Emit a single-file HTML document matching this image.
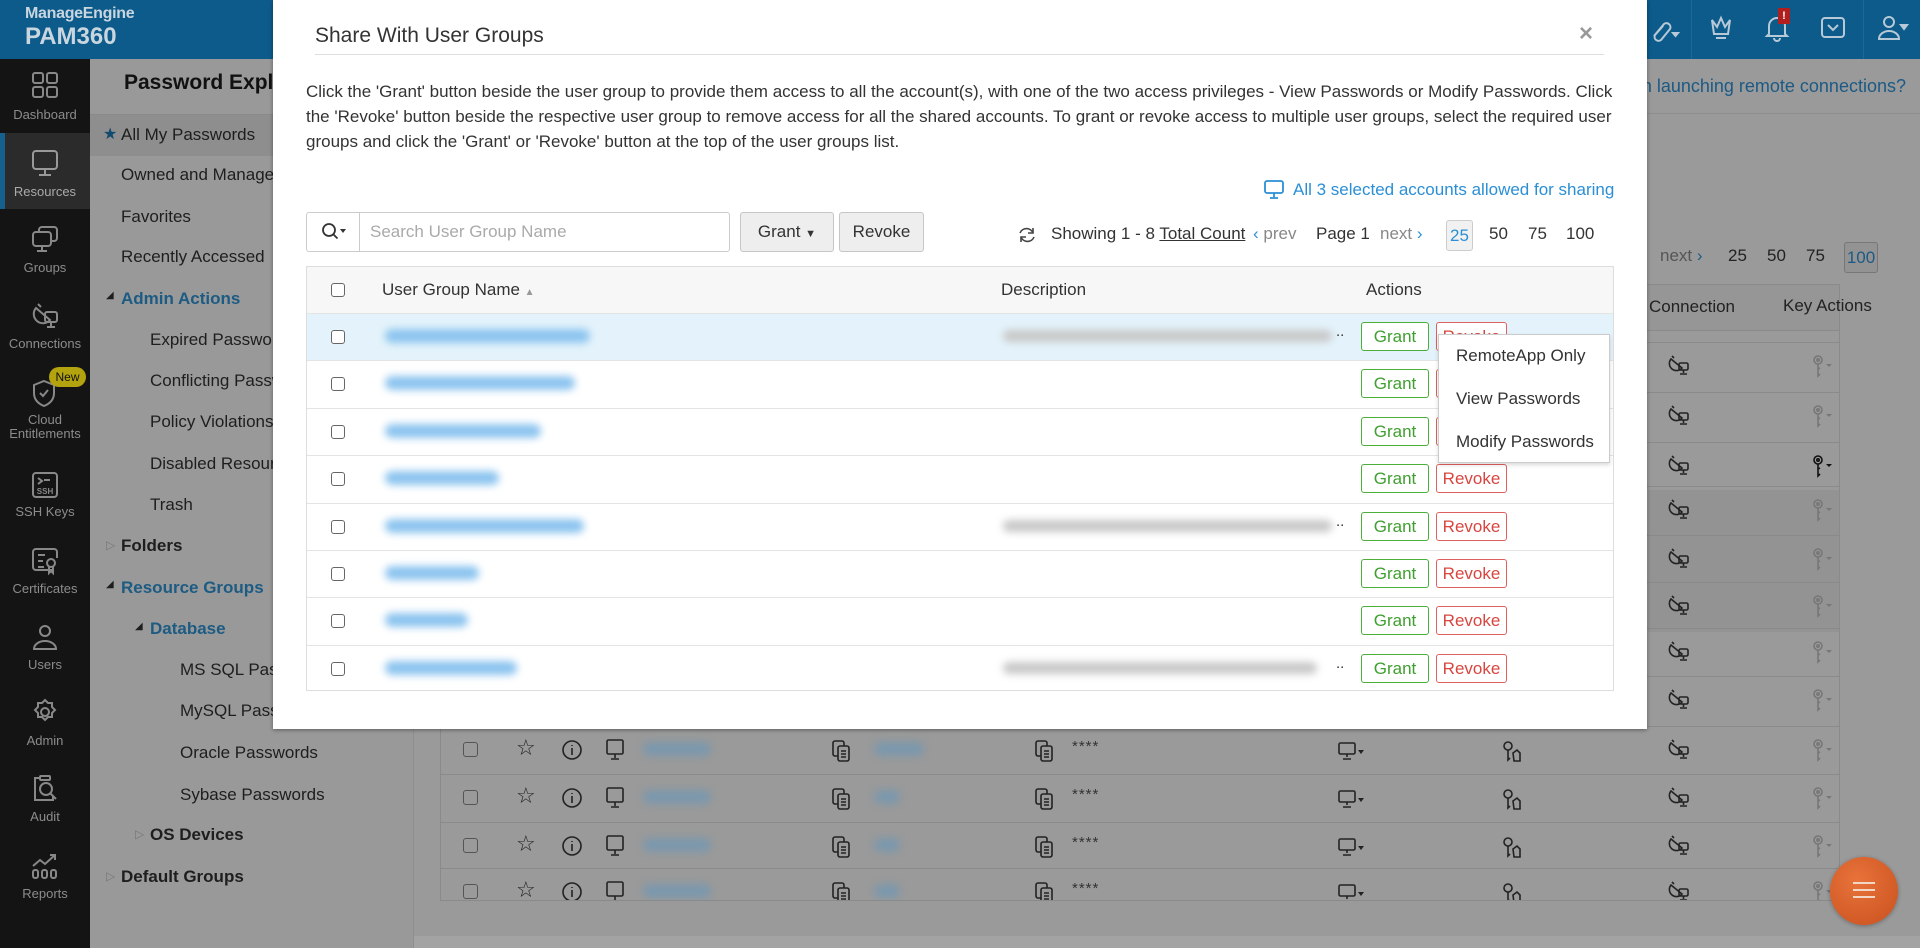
<!DOCTYPE html>
<html><head><meta charset="utf-8">
<style>
*{margin:0;padding:0;box-sizing:border-box}
body{width:1920px;height:948px;overflow:hidden;position:relative;background:#999;font-family:"Liberation Sans","DejaVu Sans",sans-serif}
.a{position:absolute;white-space:nowrap}
.hdr{left:0;top:0;width:1920px;height:59px;background:#0c5b8b}
.side{left:0;top:59px;width:90px;height:889px;background:#141414}
.sl{position:absolute;width:90px;text-align:center;color:#8c8c8c;font-size:13px}
.si{position:absolute;left:30px;width:30px;height:30px}
.tree{left:90px;top:59px;width:323px;height:889px;background:#999}
.tt{position:absolute;font-size:17px;color:#1e1e1e}
.blue{color:#1d5b83}
.b{font-weight:bold}
.modal{left:273px;top:0;width:1374px;height:729px;background:#fff;box-shadow:0 1px 4px rgba(0,0,0,.4)}
.m{position:absolute;white-space:nowrap}
.btn{position:absolute;border:1px solid #c6c6c6;background:#eee;border-radius:3px;font-size:17px;color:#333;text-align:center;line-height:38px}
.row{position:absolute;left:1px;width:1306px;height:47px;border-top:1px solid #e4e4e4}
.cb{position:absolute;width:14px;height:14px;border:1.5px solid #666;border-radius:3px;background:#fff}
.g{position:absolute;width:68px;height:29px;border:1px solid #4caf3a;border-radius:3px;color:#3f9f2f;font-size:17px;text-align:center;line-height:27px;background:#fff}
.r{position:absolute;width:71px;height:29px;border:1px solid #e06060;border-radius:3px;color:#d9453f;font-size:17px;text-align:center;line-height:27px;background:#fff}
.blur{position:absolute;height:14px;border-radius:7px;background:#8cc4ef;filter:blur(4px)}
.blurg{position:absolute;height:12px;border-radius:6px;background:#c8c8c8;filter:blur(4px)}
.bgrow{position:absolute;left:0;width:1400px;height:47px;border-top:1px solid #8a8a8a}
.ic{position:absolute}
</style></head><body>

<div class="a hdr"></div>
<div class="a" style="left:25px;top:5px;font-size:16px;color:#c9d6df;font-weight:bold;letter-spacing:-0.3px">ManageEngine</div>
<div class="a" style="left:25px;top:23px;font-size:24px;color:#c9d6df;font-weight:bold">PAM360</div>
<div class="a" style="left:1691px;top:0;width:1px;height:59px;background:#1a6a98"></div>
<div class="a" style="left:1863px;top:0;width:1px;height:59px;background:#1a6a98"></div>
<svg class="ic" style="left:1648px;top:14px" width="34" height="30" viewBox="0 0 34 30" fill="none" stroke="#b7c9d6" stroke-width="2"><path d="M6 22l10-12a4 4 0 016 5l-9 11a4 4 0 01-6-5l8-9"/><path d="M25 19h5l-2.5 3z" fill="#b7c9d6"/></svg>
<svg class="ic" style="left:1707px;top:14px" width="28" height="28" viewBox="0 0 28 28" fill="none" stroke="#b7c9d6" stroke-width="2"><path d="M5 6l5 7 4-9 4 9 5-7-2 14H7z"/><path d="M9 24h10"/></svg>
<svg class="ic" style="left:1762px;top:10px" width="30" height="32" viewBox="0 0 30 32" fill="none" stroke="#b7c9d6" stroke-width="2"><path d="M7 24V16a8 8 0 0116 0v8l2 2H5z"/><path d="M12 28a3 3 0 006 0"/></svg>
<div class="a" style="left:1778px;top:8px;width:12px;height:16px;background:#b01e1e;color:#fff;font-size:11px;text-align:center;font-weight:bold;line-height:16px">!</div>
<svg class="ic" style="left:1819px;top:15px" width="28" height="26" viewBox="0 0 28 26" fill="none" stroke="#b7c9d6" stroke-width="2"><rect x="3" y="3" width="22" height="19" rx="3"/><path d="M9 10l5 5 5-5"/></svg>
<svg class="ic" style="left:1876px;top:14px" width="34" height="28" viewBox="0 0 34 28" fill="none" stroke="#b7c9d6" stroke-width="2"><circle cx="13" cy="8" r="5"/><path d="M3 25a10 8 0 0120 0z"/><path d="M25 11h6l-3 4z" fill="#b7c9d6"/></svg>

<div class="a side"></div>
<div class="a" style="left:0;top:133px;width:90px;height:76px;background:#2b2b2b"></div>
<div class="a" style="left:0;top:133px;width:5px;height:76px;background:#15608e"></div>
<svg class="si" style="top:70px" viewBox="0 0 30 30" fill="none" stroke="#888" stroke-width="2"><rect x="3" y="3" width="10" height="10" rx="2"/><rect x="17" y="3" width="10" height="10" rx="2"/><rect x="3" y="17" width="10" height="10" rx="2"/><rect x="17" y="17" width="10" height="10" rx="2"/></svg>
<div class="sl" style="top:107px">Dashboard</div>
<svg class="si" style="top:148px" viewBox="0 0 30 30" fill="none" stroke="#999" stroke-width="2"><rect x="3" y="3" width="24" height="18" rx="3"/><path d="M15 21v5M9 27h12"/></svg>
<div class="sl" style="top:184px;color:#aaa">Resources</div>
<svg class="si" style="top:224px" viewBox="0 0 30 30" fill="none" stroke="#888" stroke-width="2"><rect x="9" y="3" width="18" height="14" rx="3"/><rect x="3" y="8" width="18" height="14" rx="3" fill="#141414"/><path d="M12 22v4M7 27h10"/></svg>
<div class="sl" style="top:260px">Groups</div>
<svg class="si" style="top:300px" viewBox="0 0 30 30" fill="none" stroke="#888" stroke-width="2"><path d="M6 8a9 9 0 0014 12z"/><path d="M8 4l3 3"/><rect x="15" y="12" width="12" height="10" rx="2"/><path d="M21 22v4M17 27h8"/></svg>
<div class="sl" style="top:336px">Connections</div>
<svg class="si" style="top:378px" viewBox="0 0 30 30" fill="none" stroke="#888" stroke-width="2"><path d="M14 3l10 4v8c0 7-5 11-10 13-5-2-10-6-10-13V7z"/><path d="M10 15l3 3 5-6"/></svg>
<div class="a" style="left:49px;top:367px;width:37px;height:20px;border-radius:10px;background:#b3a30e;color:#111;font-size:12px;text-align:center;line-height:20px">New</div>
<div class="sl" style="top:413px;line-height:14px">Cloud<br>Entitlements</div>
<svg class="si" style="top:470px" viewBox="0 0 30 30" fill="none" stroke="#888" stroke-width="2"><rect x="3" y="3" width="24" height="24" rx="3"/><path d="M8 8l4 3-4 3M14 10h6"/><text x="15" y="24" font-size="8" text-anchor="middle" fill="#888" stroke="none" font-weight="bold" font-family="Liberation Sans">SSH</text></svg>
<div class="sl" style="top:504px">SSH Keys</div>
<svg class="si" style="top:546px" viewBox="0 0 30 30" fill="none" stroke="#888" stroke-width="2"><path d="M22 24H6a3 3 0 01-3-3V6a3 3 0 013-3h18a3 3 0 013 3v6"/><path d="M8 9h7M8 15h5M8 21h6"/><circle cx="21" cy="17" r="4"/><path d="M19 21v6l2-2 2 2v-6"/></svg>
<div class="sl" style="top:581px">Certificates</div>
<svg class="si" style="top:622px" viewBox="0 0 30 30" fill="none" stroke="#888" stroke-width="2"><circle cx="15" cy="9" r="5"/><path d="M4 27a11 8 0 0122 0z"/></svg>
<div class="sl" style="top:657px">Users</div>
<svg class="si" style="top:697px" viewBox="0 0 30 30" fill="none" stroke="#888" stroke-width="2"><circle cx="15" cy="15" r="4"/><path d="M15 3l3 3h4v4l3 3-3 3v4h-4l-3 3-3-3H8v-4l-3-3 3-3V6h4z"/></svg>
<div class="sl" style="top:733px">Admin</div>
<svg class="si" style="top:773px" viewBox="0 0 30 30" fill="none" stroke="#888" stroke-width="2"><path d="M10 5H5v22h18v-4"/><rect x="10" y="3" width="10" height="4" rx="1"/><circle cx="16" cy="16" r="6"/><path d="M20 20l6 6"/></svg>
<div class="sl" style="top:809px">Audit</div>
<svg class="si" style="top:851px" viewBox="0 0 30 30" fill="none" stroke="#888" stroke-width="2"><path d="M3 15l7-6 5 4 10-9M20 4h5v5"/><rect x="3" y="19" width="5" height="8" rx="2"/><rect x="12" y="19" width="5" height="8" rx="2"/><rect x="21" y="19" width="5" height="8" rx="2"/></svg>
<div class="sl" style="top:886px">Reports</div>

<div class="a tree"></div>
<div class="a" style="left:413px;top:59px;width:1px;height:889px;background:#8e8e8e"></div>
<div class="a" style="left:124px;top:71px;font-size:21px;font-weight:bold;color:#111">Password Explorer</div>
<div class="a" style="left:90px;top:114px;width:323px;height:1px;background:#8a8a8a"></div>
<div class="a" style="left:90px;top:115px;width:323px;height:41px;background:#8e8e8e"></div>
<div class="a tt" style="left:103px;top:124px;color:#114a6e;font-size:16px">&#x2605;</div>
<div class="a tt" style="left:121px;top:125px">All My Passwords</div>
<div class="a tt" style="left:121px;top:165px">Owned and Managed</div>
<div class="a tt" style="left:121px;top:207px">Favorites</div>
<div class="a tt" style="left:121px;top:247px">Recently Accessed</div>
<div class="a tt" style="left:106px;top:290px;font-size:10px">&#x25E2;</div>
<div class="a tt blue b" style="left:121px;top:289px">Admin Actions</div>
<div class="a tt" style="left:150px;top:330px">Expired Passwords</div>
<div class="a tt" style="left:150px;top:371px">Conflicting Passwords</div>
<div class="a tt" style="left:150px;top:412px">Policy Violations</div>
<div class="a tt" style="left:150px;top:454px">Disabled Resources</div>
<div class="a tt" style="left:150px;top:495px">Trash</div>
<div class="a tt" style="left:106px;top:538px;font-size:12px;color:#777">&#x25B7;</div>
<div class="a tt b" style="left:121px;top:536px">Folders</div>
<div class="a tt" style="left:106px;top:579px;font-size:10px">&#x25E2;</div>
<div class="a tt blue b" style="left:121px;top:578px">Resource Groups</div>
<div class="a tt" style="left:135px;top:621px;font-size:10px">&#x25E2;</div>
<div class="a tt blue b" style="left:150px;top:619px">Database</div>
<div class="a tt" style="left:180px;top:660px">MS SQL Passwords</div>
<div class="a tt" style="left:180px;top:701px">MySQL Passwords</div>
<div class="a tt" style="left:180px;top:743px">Oracle Passwords</div>
<div class="a tt" style="left:180px;top:785px">Sybase Passwords</div>
<div class="a tt" style="left:135px;top:827px;font-size:12px;color:#777">&#x25B7;</div>
<div class="a tt b" style="left:150px;top:825px">OS Devices</div>
<div class="a tt" style="left:106px;top:869px;font-size:12px;color:#777">&#x25B7;</div>
<div class="a tt b" style="left:121px;top:867px">Default Groups</div>

<div class="a" style="left:414px;top:59px;width:1506px;height:889px;background:#9a9a9a"></div>
<div class="a" style="left:414px;top:936px;width:1506px;height:12px;background:#a3a3a3"></div>
<div class="a" style="left:1200px;top:76px;width:706px;text-align:right;font-size:18px;color:#1c5a85">Need help in launching remote connections?</div>
<div class="a" style="left:414px;top:113px;width:1506px;height:1px;background:#8e8e8e"></div>
<div class="a" style="left:1660px;top:246px;font-size:17px;color:#555">next <span style="color:#1c5a85">&#x203A;</span></div>
<div class="a" style="left:1728px;top:246px;font-size:17px;color:#222">25</div>
<div class="a" style="left:1767px;top:246px;font-size:17px;color:#222">50</div>
<div class="a" style="left:1806px;top:246px;font-size:17px;color:#222">75</div>
<div class="a" style="left:1844px;top:242px;width:34px;height:31px;border:1px solid #777;border-radius:3px;background:#939393;font-size:17px;color:#1c5a85;text-align:center;line-height:29px">100</div>
<div class="a" style="left:440px;top:284px;width:1400px;height:617px;border:1px solid #8a8a8a;background:#9a9a9a;overflow:hidden">
  <div class="a" style="left:0;top:0;width:1400px;height:46px;background:#969696;border-bottom:1px solid #8a8a8a"></div>
  <div class="a" style="left:1207px;top:205px;width:193px;height:142px;background:#939393"></div>
  <div class="a" style="left:1208px;top:12px;font-size:17px;color:#222">Connection</div>
  <div id="bgrows"></div>
</div>
<div class="a" style="left:1783px;top:296px;font-size:17px;color:#222">Key Actions</div>

<div class="a" style="left:1830px;top:857px;width:68px;height:68px;border-radius:50%;background:radial-gradient(circle at 40% 35%,#e8733a,#c9501e);box-shadow:0 1px 4px rgba(0,0,0,.3)"></div>
<div class="a" style="left:1853px;top:882px;width:22px;height:2px;background:#f3d6c6;box-shadow:0 7px 0 #f3d6c6,0 14px 0 #f3d6c6"></div>

<div class="a modal">
  <div class="m" style="left:42px;top:24px;font-size:21px;color:#333">Share With User Groups</div>
  <div class="m" style="left:42px;top:54px;width:1289px;height:1px;background:#ddd"></div>
  <div class="m" style="left:1306px;top:20px;font-size:24px;color:#999;font-weight:bold">&#xD7;</div>
  <div class="m" style="left:33px;top:79px;font-size:17px;color:#333;line-height:25px">Click the 'Grant' button beside the user group to provide them access to all the account(s), with one of the two access privileges - View Passwords or Modify Passwords. Click<br>the 'Revoke' button beside the respective user group to remove access for all the shared accounts. To grant or revoke access to multiple user groups, select the required user<br>groups and click the 'Grant' or 'Revoke' button at the top of the user groups list.</div>
  <svg class="m" style="left:990px;top:178px" width="22" height="22" viewBox="0 0 22 22" fill="none" stroke="#2a8fd6" stroke-width="1.8"><rect x="2" y="3" width="18" height="12" rx="2"/><path d="M11 15v4M7 20h8"/></svg>
  <div class="m" style="left:1020px;top:180px;font-size:17px;color:#2a8fd6">All 3 selected accounts allowed for sharing</div>

  <div class="m" style="left:33px;top:212px;width:424px;height:40px;border:1px solid #ccc;border-radius:3px"></div>
  <div class="m" style="left:86px;top:212px;width:1px;height:40px;background:#ccc"></div>
  <svg class="m" style="left:47px;top:221px" width="28" height="22" viewBox="0 0 28 22" fill="none" stroke="#333" stroke-width="1.8"><circle cx="9" cy="9" r="6"/><path d="M13.5 13.5l4 4"/><path d="M20 8h6l-3 4z" fill="#333" stroke="none"/></svg>
  <div class="m" style="left:97px;top:222px;font-size:17px;color:#aaa">Search User Group Name</div>
  <div class="btn" style="left:467px;top:212px;width:94px;height:40px">Grant <span style="font-size:11px">&#x25BC;</span></div>
  <div class="btn" style="left:566px;top:212px;width:85px;height:40px">Revoke</div>

  <svg class="m" style="left:744px;top:225px" width="20" height="20" viewBox="0 0 20 20" fill="none" stroke="#444" stroke-width="1.6"><path d="M16 8a7 7 0 00-13 0M4 12a7 7 0 0013 0"/><path d="M16 3v5h-5M4 17v-5h5"/></svg>
  <div class="m" style="left:778px;top:224px;font-size:17px;color:#333">Showing 1 - 8 <span style="text-decoration:underline">Total Count</span></div>
  <div class="m" style="left:980px;top:224px;font-size:17px;color:#888"><span style="color:#2a8fd6">&#x2039;</span> prev</div>
  <div class="m" style="left:1043px;top:224px;font-size:17px;color:#333">Page 1</div>
  <div class="m" style="left:1107px;top:224px;font-size:17px;color:#888">next <span style="color:#2a8fd6">&#x203A;</span></div>
  <div class="m" style="left:1173px;top:220px;width:27px;height:31px;border:1px solid #ccc;border-radius:3px;background:#f1f1f1;font-size:17px;color:#2a8fd6;text-align:center;line-height:29px">25</div>
  <div class="m" style="left:1216px;top:224px;font-size:17px;color:#333">50</div>
  <div class="m" style="left:1255px;top:224px;font-size:17px;color:#333">75</div>
  <div class="m" style="left:1293px;top:224px;font-size:17px;color:#333">100</div>

  <div class="m" style="left:33px;top:266px;width:1308px;height:425px;border:1px solid #ddd">
    <div class="m" style="left:0;top:0;width:1306px;height:46px;background:#f7f7f7"></div>
    <div class="cb" style="left:24px;top:16px"></div>
    <div class="m" style="left:75px;top:13px;font-size:17px;color:#333">User Group Name <span style="font-size:10px;color:#999">&#x25B2;&#xFE0E;</span></div>
    <div class="m" style="left:694px;top:13px;font-size:17px;color:#333">Description</div>
    <div class="m" style="left:1059px;top:13px;font-size:17px;color:#333">Actions</div>
    <div id="rows"></div>
  </div>

  <div class="m" style="left:1165px;top:334px;width:172px;height:129px;background:#fff;border:1px solid #ccc;box-shadow:0 2px 4px rgba(0,0,0,.15);z-index:5">
    <div class="m" style="left:17px;top:11px;font-size:17px;color:#333">RemoteApp Only</div>
    <div class="m" style="left:17px;top:54px;font-size:17px;color:#333">View Passwords</div>
    <div class="m" style="left:17px;top:97px;font-size:17px;color:#333">Modify Passwords</div>
  </div>
</div>

<script>
(function(){
var names=[205,190,156,114,199,94,83,132],desc={0:329,4:329,7:314};
var h='';
for(var i=0;i<8;i++){
 var t=46+i*47.4;
 h+='<div class="row" style="left:0;top:'+t+'px;'+(i==0?'background:#e4f3fb;':'')+'"></div>';
 h+='<div class="cb" style="left:24px;top:'+(t+17)+'px"></div>';
 h+='<div class="blur" style="left:78px;top:'+(t+16)+'px;width:'+names[i]+'px"></div>';
 if(desc[i]){h+='<div class="blurg" style="left:696px;top:'+(t+17)+'px;width:'+desc[i]+'px"></div><div class="m" style="left:1029px;top:'+(t+10)+'px;font-size:15px;color:#333">..</div>';}
 h+='<div class="g" style="left:1054px;top:'+(t+9)+'px">Grant</div>';
 h+='<div class="r" style="left:1129px;top:'+(t+9)+'px">Revoke</div>';
}
document.getElementById('rows').innerHTML=h;
var ico='stroke="#222" fill="none" stroke-width="1.6"';
var conn='<svg width="24" height="24" viewBox="0 0 24 24" '+ico+'><path d="M4 6a7 7 0 0011 9z"/><path d="M5 3l2 2"/><rect x="12" y="10" width="9" height="7" rx="1.5"/><path d="M16.5 17v3M13 21h7"/></svg>';
var key='<svg width="30" height="26" viewBox="0 0 30 26" stroke="#777" fill="none" stroke-width="1.6"><circle cx="9" cy="7" r="4"/><circle cx="9" cy="7" r="1.2"/><path d="M9 11v12l2-2M9 16l2-1"/><path d="M17 11h6l-3 3z" fill="#777" stroke="none"/></svg>';
var b='';
var ys=[365,415,465,509,558,605,651,699,749,797,845,891];
var X=440,Y=284;
for(var j=0;j<ys.length;j++){
 var y=ys[j]-Y;
 b+='<div class="bgrow" style="top:'+(y-24)+'px"></div>';
 b+='<div class="ic" style="left:'+(1666-X)+'px;top:'+(y-13)+'px">'+conn+'</div>';
 var k=key; if(j==2)k=k.replace(/#777/g,'#111');
 b+='<div class="ic" style="left:'+(1808-X)+'px;top:'+(y-13)+'px">'+k+'</div>';
 if(ys[j]>735){
  b+='<div class="ic" style="left:'+(462-X)+'px;top:'+(y-8)+'px;width:15px;height:15px;border:1.5px solid #555;border-radius:3px"></div>';
  b+='<div class="ic" style="left:'+(515-X)+'px;top:'+(y-15)+'px;font-size:22px;color:#222">&#x2606;</div>';
  b+='<svg class="ic" style="left:'+(560-X)+'px;top:'+(y-11)+'px" width="22" height="22" viewBox="0 0 22 22" '+ico+'><circle cx="11" cy="11" r="9"/><path d="M11 9v7M11 6v1"/></svg>';
  b+='<svg class="ic" style="left:'+(603-X)+'px;top:'+(y-12)+'px" width="22" height="24" viewBox="0 0 22 24" '+ico+'><rect x="3" y="2" width="16" height="14" rx="1.5"/><path d="M11 16v4M7 21h8"/></svg>';
  b+='<div class="ic" style="left:'+(642-X)+'px;top:'+(y-8)+'px;width:68px;height:14px;border-radius:7px;background:#7b98ad;filter:blur(4px)"></div>';
  b+='<svg class="ic" style="left:'+(829-X)+'px;top:'+(y-11)+'px" width="22" height="24" viewBox="0 0 22 24" '+ico+'><rect x="3" y="2" width="11" height="15" rx="2"/><rect x="8" y="7" width="11" height="15" rx="2" fill="#9a9a9a"/><path d="M11 12h5M11 15h5M11 18h5"/></svg>';
  b+='<div class="ic" style="left:'+(873-X)+'px;top:'+(y-8)+'px;width:'+(j==8?50:26)+'px;height:14px;border-radius:7px;background:#7b98ad;filter:blur(4px)"></div>';
  b+='<svg class="ic" style="left:'+(1032-X)+'px;top:'+(y-11)+'px" width="22" height="24" viewBox="0 0 22 24" '+ico+'><rect x="3" y="2" width="11" height="15" rx="2"/><rect x="8" y="7" width="11" height="15" rx="2" fill="#9a9a9a"/><path d="M11 12h5M11 15h5M11 18h5"/></svg>';
  b+='<div class="ic" style="left:'+(1071-X)+'px;top:'+(y-12)+'px;font-size:15px;color:#333;letter-spacing:1px">****</div>';
  b+='<svg class="ic" style="left:'+(1336-X)+'px;top:'+(y-9)+'px" width="30" height="22" viewBox="0 0 30 22" '+ico+'><rect x="2" y="2" width="16" height="11" rx="1.5"/><path d="M10 13v3M6 18h8"/><path d="M21 9h6l-3 4z" fill="#222" stroke="none"/></svg>';
  b+='<svg class="ic" style="left:'+(1498-X)+'px;top:'+(y-11)+'px" width="28" height="26" viewBox="0 0 28 26" '+ico+'><circle cx="9" cy="7" r="4"/><path d="M9 11v10l2-2"/><path d="M14 14l4-3 3 3v8h-6z"/></svg>';
 }
}
document.getElementById('bgrows').innerHTML=b;
})();
</script>
</body></html>
